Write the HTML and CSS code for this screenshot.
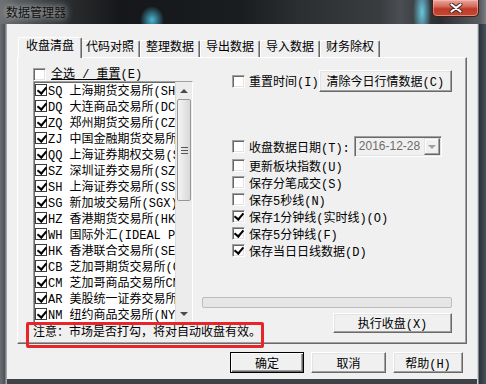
FILE: index.html
```html
<!DOCTYPE html>
<html lang="zh-CN">
<head>
  <meta charset="UTF-8">
  <title>数据管理器</title>
  <link rel="stylesheet" href="styles.css">
</head>
<body>
  <div class="window">
    <div class="titlebar">
      <span class="title">数据管理器</span>
      <div class="close">
        <svg width="14" height="10" viewBox="0 0 14 10">
          <path d="M2.5 1.5 L11.5 8.5 M11.5 1.5 L2.5 8.5" stroke="#3a2a28" stroke-width="4" stroke-linecap="round"/>
          <path d="M2.5 1.5 L11.5 8.5 M11.5 1.5 L2.5 8.5" stroke="#fff" stroke-width="2.2" stroke-linecap="round"/>
        </svg>
      </div>
    </div>

    <div class="frame">
      <div class="client">
        <div class="tabs">
          <div class="tab active">收盘清盘</div>
          <div class="tab">代码对照</div>
          <div class="tab">整理数据</div>
          <div class="tab">导出数据</div>
          <div class="tab">导入数据</div>
          <div class="tab">财务除权</div>
        </div>

        <div class="panel">
          <div class="col-left">
            <label class="select-all"><span class="cb"></span><span><span class="u">全选 / 重置</span>(E)</span></label>
            <div class="listbox">
              <ul class="items">
                <li><span class="cb flat on"></span>SQ 上海期货交易所(SHFE)</li>
                <li><span class="cb flat on"></span>DQ 大连商品交易所(DCE)</li>
                <li><span class="cb flat on"></span>ZQ 郑州期货交易所(CZCE)</li>
                <li><span class="cb flat on"></span>ZJ 中国金融期货交易所</li>
                <li><span class="cb flat on"></span>QQ 上海证券期权交易(SSE)</li>
                <li><span class="cb flat on"></span>SZ 深圳证券交易所(SZSE)</li>
                <li><span class="cb flat on"></span>SH 上海证券交易所(SSE)</li>
                <li><span class="cb flat on"></span>SG 新加坡交易所(SGX)</li>
                <li><span class="cb flat on"></span>HZ 香港期货交易所(HKFE)</li>
                <li><span class="cb flat on"></span>WH 国际外汇(IDEAL PRO)</li>
                <li><span class="cb flat on"></span>HK 香港联合交易所(SEHK)</li>
                <li><span class="cb flat on"></span>CB 芝加哥期货交易所(CBOT)</li>
                <li><span class="cb flat on"></span>CM 芝加哥商品交易所CME</li>
                <li><span class="cb flat on"></span>AR 美股统一证券交易所</li>
                <li><span class="cb flat on"></span>NM 纽约商品交易所(NYMEX)</li>
              </ul>
              <div class="scrollbar">
                <div class="arrow up"></div>
                <div class="thumb"><span class="grip"></span></div>
                <div class="track"></div>
                <div class="arrow down"></div>
              </div>
            </div>
            <p class="note">注意：市场是否打勾，将对自动收盘有效。</p>
          </div>

          <div class="col-right">
            <div class="row-first">
              <label class="opt"><span class="cb"></span>重置时间(I)</label>
              <button class="btn wide">清除今日行情数据(C)</button>
            </div>
            <div class="opt date">
              <span class="cb"></span>收盘数据日期(T):
              <div class="combo">
                <span class="value">2016-12-28</span>
                <span class="drop"></span>
              </div>
            </div>
            <label class="opt"><span class="cb"></span>更新板块指数(U)</label>
            <label class="opt"><span class="cb"></span>保存分笔成交(S)</label>
            <label class="opt"><span class="cb"></span>保存5秒线(N)</label>
            <label class="opt"><span class="cb on"></span>保存1分钟线(实时线)(O)</label>
            <label class="opt"><span class="cb on"></span>保存5分钟线(F)</label>
            <label class="opt"><span class="cb on"></span>保存当日日线数据(D)</label>
            <div class="progress"></div>
            <button class="btn run">执行收盘(X)</button>
          </div>

          <div class="mark"></div>
        </div>

        <div class="actions">
          <button class="btn default ok">确定</button>
          <button class="btn cancel">取消</button>
          <button class="btn help">帮助(H)</button>
        </div>
      </div>
    </div>
  </div>
</body>
</html>
```

FILE: styles.css
```css
* {
  box-sizing: border-box;
}
body {
  margin: 0;
  font-family: "Liberation Mono", "Noto Sans CJK SC", monospace;
  font-size: 12px;
  color: #000;
  background: #3e4246;
}
.window {
  width: 486px;
  height: 384px;
  display: flex;
  flex-direction: column;
  background: linear-gradient(90deg, #6a6e72 0, #4e5256 5px, #a4a8ac 6px, #a4a8ac 7px, #3e4246 7px, #3e4246 477px, #cfd3d7 477px, #cfd3d7 478px, #2b3138 479px, #46525e 486px);
}

/* title bar (aero glass) */
.titlebar {
  height: 24px;
  display: flex;
  align-items: flex-start;
  background:
    radial-gradient(ellipse 12px 14px at 152px 20px, rgba(80, 200, 235, 0.9), transparent),
    radial-gradient(ellipse 9px 30px at 422px 12px, rgba(110, 215, 240, 0.9), transparent),
    linear-gradient(90deg, #6e7275 0, #55595c 20px, #2a2c2e 70px, #15171a 120px, #1a1d20 240px, #2c2f32 300px, #3a3d40 380px, #4a4e52 400px, #2a2e32 440px, #5a5e62 480px, #7a7e82 486px);
}
.title {
  font-family: "Noto Sans CJK SC", sans-serif;
  font-size: 12px;
  line-height: 24px;
  padding-left: 6px;
  color: #111;
  text-shadow: 0 0 6px rgba(220, 220, 220, 0.8), 0 0 10px rgba(200, 200, 200, 0.6);
}
.close {
  margin-left: auto;
  margin-right: 7px;
  width: 47px;
  height: 17px;
  display: flex;
  align-items: center;
  justify-content: center;
  border: 1px solid #4a1a14;
  border-top: none;
  border-radius: 0 0 5px 5px;
  background: linear-gradient(#e9a89f 0, #d66a5a 40%, #c03a26 55%, #c24a36 100%);
  box-shadow: inset 0 0 0 1px rgba(255, 200, 190, 0.5);
}

/* frame + client */
.frame {
  flex: 1;
  display: flex;
  padding: 0 9px 5px 7px;
}
.client {
  flex: 1;
  background: #f0f0f0;
  padding-top: 13px;
  display: flex;
  flex-direction: column;
}

/* tabs */
.tabs {
  display: flex;
  align-items: flex-end;
  height: 21px;
  margin: 0 10px -1px;
  padding-left: 3px;
  position: relative;
  z-index: 1;
}
.tab {
  width: 60px;
  height: 17px;
  margin-bottom: 1px;
  line-height: 15px;
  text-align: center;
  white-space: nowrap;
  background: #f0f0f0;
  border: 1px solid #fff;
  border-right-color: #696969;
  border-bottom: none;
  border-radius: 2px 2px 0 0;
  box-shadow: inset -1px 0 #a0a0a0;
}
.tab.active {
  width: 64px;
  height: 21px;
  margin: 0 -2px;
  line-height: 18px;
  position: relative;
  z-index: 2;
}

/* tab panel */
.panel {
  position: relative;
  height: 287px;
  margin: 0 10px;
  padding: 10px 14px 0 15px;
  display: grid;
  grid-template-columns: 160px 250px;
  column-gap: 9px;
  align-items: start;
  border: 1px solid;
  border-color: #fff #696969 #696969 #fff;
  box-shadow: inset -1px -1px #a0a0a0;
}

/* checkboxes */
.cb {
  flex: none;
  position: relative;
  width: 13px;
  height: 13px;
  background: #fff;
  border: 1px solid;
  border-color: #a0a0a0 #fff #fff #a0a0a0;
  box-shadow: inset 1px 1px #696969, inset -1px -1px #e3e3e3;
}
.cb.flat {
  width: 12px;
  height: 12px;
  border: 1px solid #3c3c3c;
  box-shadow: none;
}
.cb.on::after {
  content: "";
  position: absolute;
  left: 3px;
  top: 0;
  width: 4px;
  height: 7px;
  border: solid #000;
  border-width: 0 2px 2px 0;
  transform: rotate(40deg);
}
.cb.flat.on::after {
  left: 3px;
  top: 0;
}

/* left column */
.select-all {
  display: flex;
  align-items: center;
  gap: 5px;
  height: 13px;
  line-height: 16px;
}
.u {
  text-decoration: underline;
}
.listbox {
  display: flex;
  height: 242px;
  background: #fff;
  border: 1px solid;
  border-color: #a0a0a0 #fff #fff #a0a0a0;
  box-shadow: inset 1px 1px #696969;
}
.items {
  flex: 1;
  min-width: 0;
  margin: 0;
  padding: 0 0 0 1px;
  list-style: none;
  overflow: hidden;
}
.items li {
  display: flex;
  align-items: center;
  gap: 1px;
  height: 16px;
  white-space: nowrap;
}
.scrollbar {
  width: 17px;
  display: flex;
  flex-direction: column;
  background: #ececec;
  border-left: 1px solid #dcdcdc;
}
.arrow {
  height: 17px;
  display: flex;
  align-items: center;
  justify-content: center;
}
.arrow::before {
  content: "";
  border-left: 4px solid transparent;
  border-right: 4px solid transparent;
}
.arrow.up::before {
  border-bottom: 4px solid #4a4a4a;
}
.arrow.down::before {
  border-top: 4px solid #4a4a4a;
}
.thumb {
  height: 102px;
  margin: 0 1px;
  display: flex;
  align-items: center;
  justify-content: center;
  border: 1px solid #979797;
  border-radius: 2px;
  background: linear-gradient(90deg, #f4f4f4, #e6e6e6 50%, #d8d8d8);
}
.grip {
  width: 7px;
  height: 7px;
  background: repeating-linear-gradient(#555 0 1px, transparent 1px 3px);
}
.track {
  flex: 1;
}
.note {
  margin: 2px 0 0;
  line-height: 16px;
  white-space: nowrap;
}

/* right column */
.col-right {
  display: flex;
  flex-direction: column;
}
.row-first {
  display: flex;
  align-items: center;
  height: 22px;
  margin-top: 2px;
}
.opt {
  display: flex;
  align-items: center;
  gap: 4px;
  height: 17px;
  padding-left: 30px;
  white-space: nowrap;
}
.opt.date {
  height: 21px;
  margin-top: 44px;
}
.combo {
  width: 91px;
  height: 21px;
  margin-left: auto;
  margin-right: 10px;
  display: flex;
  padding: 1px;
  background: #f0f0f0;
  border: 1px solid;
  border-color: #a0a0a0 #fff #fff #a0a0a0;
  box-shadow: inset 1px 1px #696969, inset -1px -1px #e3e3e3;
}
.combo .value {
  flex: 1;
  font-family: "Liberation Sans", sans-serif;
  color: #6d6d6d;
  line-height: 17px;
  padding-left: 3px;
}
.combo .drop {
  width: 16px;
  display: flex;
  align-items: center;
  justify-content: center;
  border: 1px solid;
  border-color: #e3e3e3 #696969 #696969 #e3e3e3;
  box-shadow: inset -1px -1px #a0a0a0, inset 1px 1px #fff;
}
.combo .drop::before {
  content: "";
  border-left: 4px solid transparent;
  border-right: 4px solid transparent;
  border-top: 4px solid #a0a0a0;
}
.progress {
  height: 11px;
  margin-top: 38px;
  background: #e6e6e6;
  border: 1px solid #bcbcbc;
  border-radius: 2px;
}

/* buttons */
.btn {
  height: 21px;
  padding: 0;
  font: inherit;
  color: #000;
  background: #f0f0f0;
  border: 1px solid;
  border-color: #fff #696969 #696969 #fff;
  box-shadow: inset -1px -1px #a0a0a0, inset 1px 1px #e3e3e3;
  white-space: nowrap;
}
.btn.default {
  border-color: #000;
  box-shadow: inset 1px 1px #fff, inset -1px -1px #696969, inset -2px -2px #a0a0a0;
}
.btn.wide {
  width: 138px;
  height: 22px;
  margin-left: auto;
}
.btn.run {
  align-self: flex-end;
  width: 119px;
  height: 20px;
  margin-top: 5px;
}
.actions {
  display: flex;
  justify-content: flex-end;
  gap: 7px;
  margin: 8px 14px 0 0;
}
.btn.ok {
  width: 74px;
}
.btn.cancel {
  width: 75px;
}
.btn.help {
  width: 70px;
}

/* red annotation box */
.mark {
  position: absolute;
  left: 8px;
  top: 264px;
  width: 238px;
  height: 26px;
  border: 3px solid #e8262a;
  border-radius: 2px;
}
```
